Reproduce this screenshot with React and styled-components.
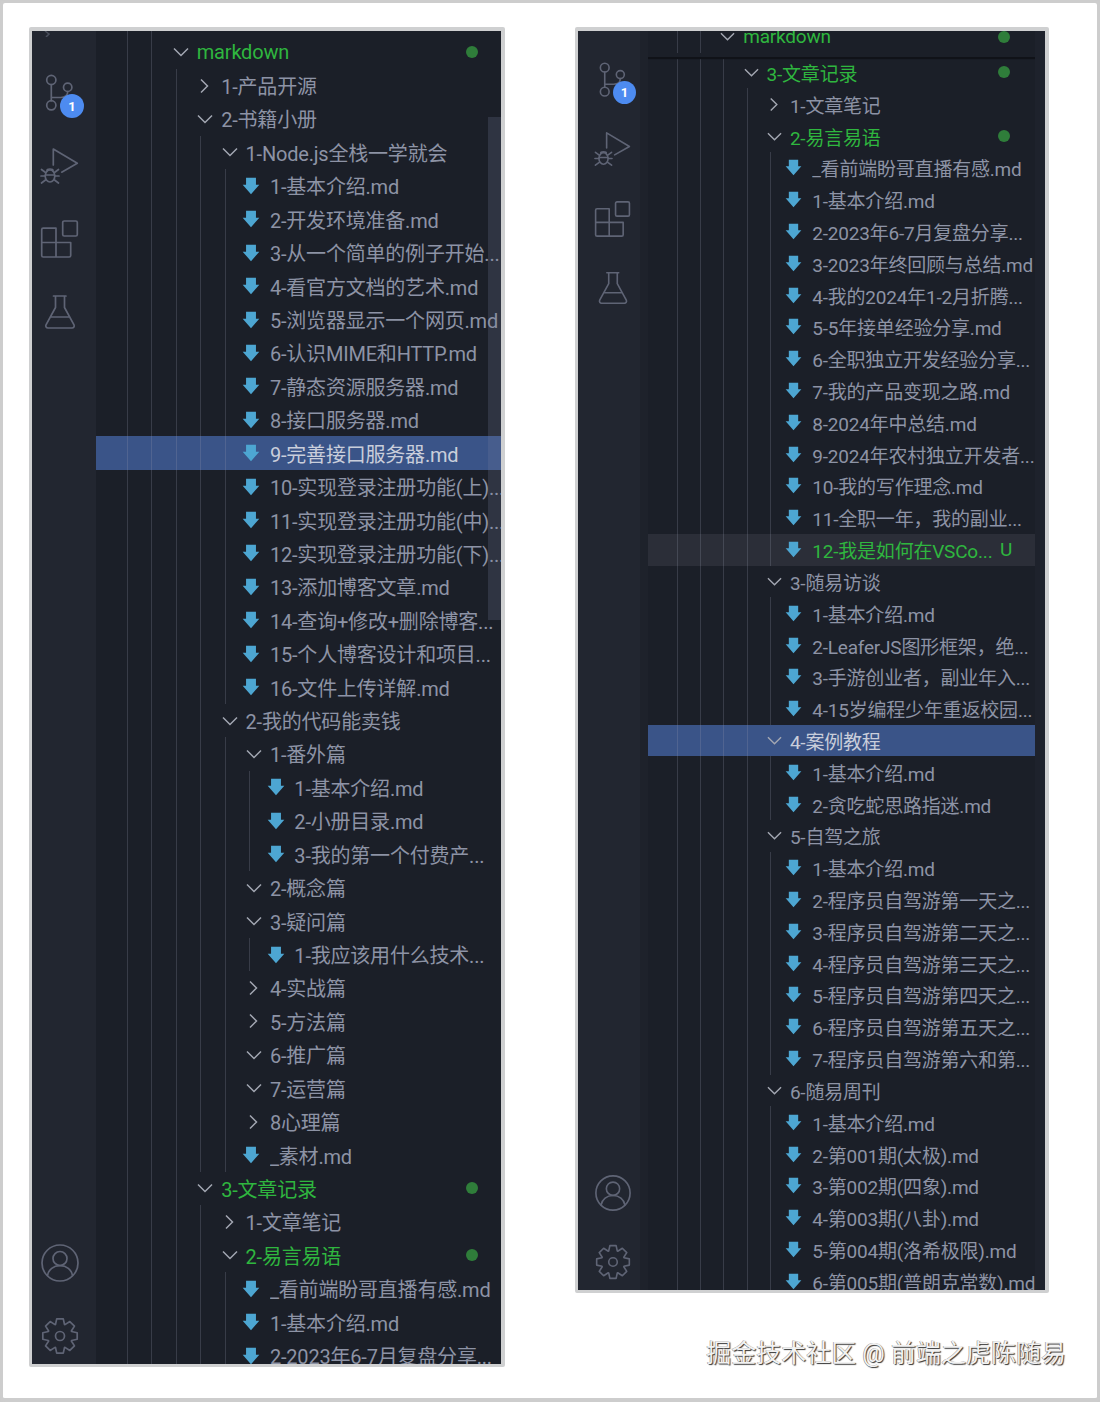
import React from 'react';
import styled, { createGlobalStyle } from 'styled-components';

const Global = createGlobalStyle`
  html, body { margin: 0; padding: 0; background: #ccc; }
  * { box-sizing: border-box; }
`;

const Page = styled.div`
  width: 1100px;
  height: 1402px;
  padding: 24px 49px 0 26px;
  display: flex;
  align-items: flex-start;
  gap: 70px;
  background: #fff;
  border: solid #cdcdcd;
  border-width: 3px 3px 4px 3px;
  border-radius: 5px;
  font-family: Roboto, 'Noto Sans CJK SC', sans-serif;
`;

const RightColumn = styled.div`
  display: flex;
  flex-direction: column;
  width: 474px;
`;

const Watermark = styled.div`
  align-self: flex-end;
  margin: 43px -17px 0 0;
  font-size: 25px;
  line-height: 36px;
  white-space: nowrap;
  color: #f2f2f2;
  text-shadow: 1px 1px 1px #333, -0.5px -0.5px 0 #888;
`;

const Window = styled.div`
  display: flex;
  width: ${(p) => p.$w}px;
  height: ${(p) => p.$h}px;
  flex: none;
  overflow: hidden;
  background: #1b1f28;
  border: solid #cfd0d1;
  border-width: 4px 4px 3px 3px;
  border-radius: 2px;
`;

const ActivityBar = styled.div`
  position: relative;
  flex: none;
  width: ${(p) => p.$w}px;
  padding: ${(p) => p.$top}px ${(p) => p.$pr}px 0 ${(p) => p.$pl}px;
  display: flex;
  flex-direction: column;
  justify-content: space-between;
  background: #222630;
  border-right: ${(p) => p.$edge}px solid #1e222b;
`;

const ActivityGroup = styled.div`
  display: flex;
  flex-direction: column;
  align-items: center;
  margin-bottom: ${(p) => p.$bottom || 0}px;
`;

const ActivityItem = styled.div`
  position: relative;
  height: ${(p) => p.$h}px;
  display: flex;
  align-items: center;
  justify-content: center;
  color: #5f6475;
`;

const Badge = styled.span`
  position: absolute;
  left: ${(p) => p.$left}px;
  top: ${(p) => p.$top}px;
  width: ${(p) => p.$size}px;
  height: ${(p) => p.$size}px;
  border-radius: 50%;
  display: flex;
  align-items: center;
  justify-content: center;
  background: #4d8bf0;
  color: #fff;
  font-size: 13px;
  font-weight: 700;
`;

const TopHint = styled.svg`
  position: absolute;
  left: 11px;
  top: 0;
  color: #4a4f5c;
`;

const Tree = styled.div`
  flex: 1;
  min-width: 0;
  position: relative;
  overflow: hidden;
`;

const Rows = styled.div`
  margin-top: ${(p) => p.$offset}px;
`;

const Row = styled.div`
  display: flex;
  align-items: center;
  height: ${(p) => p.$h}px;
  padding-left: ${(p) => p.$pad}px;
  font-size: ${(p) => p.$fs}px;
  white-space: nowrap;
  background: ${(p) => (p.$selected ? '#3a5488' : p.$hover ? '#2b2e38' : 'transparent')};
  color: ${(p) => (p.$green ? '#2fb63f' : p.$selected ? '#c9cedb' : '#8d93a5')};
`;

const Guide = styled.span`
  flex: none;
  align-self: stretch;
  width: ${(p) => p.$w}px;
  border-left: 1px solid rgba(150, 156, 175, 0.24);
`;

const Twistie = styled.span`
  flex: none;
  width: ${(p) => p.$w}px;
  display: flex;
  align-items: center;
  color: #a3a7b2;

  svg {
    margin-left: -3px;
  }
`;

const FileSlot = styled.span`
  flex: none;
  width: ${(p) => p.$w}px;
  display: flex;
  align-items: center;

  svg {
    margin-left: ${(p) => p.$shift}px;
  }
`;

const Label = styled.span`
  flex: 1;
  min-width: 0;
  overflow: hidden;
  letter-spacing: -0.2px;
`;

const Status = styled.span`
  flex: none;
  width: ${(p) => p.$w}px;
  display: flex;
  align-items: center;
  color: #2fb63f;
  font-size: 19px;
`;

const Dot = styled.span`
  width: 12px;
  height: 12px;
  border-radius: 50%;
  background: #2f7d3a;
`;

const Scrollbar = styled.div`
  position: absolute;
  top: 86px;
  right: 0;
  width: 13px;
  height: 503px;
  background: rgba(120, 128, 160, 0.22);
`;

const StickyHeader = styled.div`
  position: relative;
  z-index: 1;
  height: 25.5px;
  overflow: hidden;
  background: #1b1f28;
  box-shadow: 0 2px 1px #101218;
  margin-right: 10px;
`;

const StickyInner = styled.div`
  margin-top: -10px;
`;

const Overview = styled.div`
  position: absolute;
  right: 0;
  top: 0;
  bottom: 0;
  width: 10px;
  background: #1e222c;
  z-index: 2;
`;

const RightRows = styled.div`
  margin-right: 10px;
`;

const MdIcon = ({ size }) => (
  <svg width={size} height={size} viewBox="0 0 16 16">
    <path d="M3.6 0.6h8.800v6.200h3L8 15.400 0.600 6.800h3z" fill="#4da6d2" />
  </svg>
);

const OpenChevron = ({ size }) => (
  <svg width={size} height={size} viewBox="0 0 16 16" fill="none" stroke="currentColor" strokeWidth="1.500">
    <path d="M1 4.500l7 7 7-7" />
  </svg>
);

const ClosedChevron = ({ size }) => (
  <svg width={size} height={size} viewBox="0 0 16 16" fill="none" stroke="currentColor" strokeWidth="1.500">
    <path d="M4 1.500l6.500 6.500-6.500 6.500" />
  </svg>
);

const gearPath = () => {
  const pts = [];
  const teeth = 8;
  for (let i = 0; i < teeth; i++) {
    const a = (i / teeth) * Math.PI * 2 - Math.PI / 2;
    const w = Math.PI / teeth;
    [
      [12.4, -w * 0.95],
      [17.5, -w * 0.48],
      [17.5, w * 0.48],
      [12.4, w * 0.95],
    ].forEach(([r, d]) => {
      pts.push(`${(20 + r * Math.cos(a + d)).toFixed(2)} ${(20 + r * Math.sin(a + d)).toFixed(2)}`);
    });
  }
  return `M${pts.join('L')}Z`;
};

const iconProps = (size) => ({
  width: size,
  height: size,
  viewBox: '0 0 40 40',
  fill: 'none',
  stroke: 'currentColor',
  strokeWidth: 1.7,
  strokeLinecap: 'round',
  strokeLinejoin: 'round',
});

const SourceControlIcon = ({ size }) => (
  <svg {...iconProps(size)}>
    <circle cx="11.3" cy="7" r="4.6" />
    <circle cx="27.7" cy="14.3" r="4.2" />
    <circle cx="11.3" cy="32.3" r="4.6" />
    <path d="M11.3 11.6v16.1M27.700 18.500c0 4.500-3 6-7 6h-9.400" />
  </svg>
);

const DebugIcon = ({ size }) => (
  <svg {...iconProps(size)}>
    <path d="M13.3 19V3l24 14.300-15.600 8.900" />
    <ellipse cx="10" cy="30" rx="4.800" ry="6" />
    <path d="M5.500 29h9M1.500 23.500l4 3M18.500 23.500l-4 3M1 30h4M15 30h4M1.500 37l4-3M18.500 37l-4-3M7 24.500c0-2 6-2 6 0" />
  </svg>
);

const ExtensionsIcon = ({ size }) => (
  <svg {...iconProps(size)}>
    <rect x="22.7" y="2" width="14.6" height="15" rx="1.5" />
    <path d="M3.200 9.200H16v14.300h14.700V36.500a1.500 1.500 0 0 1-1.500 1.500H3.200a1.500 1.500 0 0 1-1.500-1.500V10.700a1.500 1.500 0 0 1 1.500-1.500zM1.700 23.500H16V38" />
  </svg>
);

const FlaskIcon = ({ size }) => (
  <svg {...iconProps(size)}>
    <path d="M13.500 4h12.500M15.500 4v11.500L6 32.800A2.200 2.200 0 0 0 8 36h24a2.200 2.200 0 0 0 2-3.200L24.500 15.500V4M10.500 25h19" />
  </svg>
);

const AccountIcon = ({ size }) => (
  <svg {...iconProps(size)}>
    <circle cx="20" cy="20" r="18" />
    <circle cx="20" cy="15.500" r="7" />
    <path d="M7.500 32.500c1-6 6-9.800 12.500-9.800s11.500 3.800 12.500 9.800" />
  </svg>
);

const GearIcon = ({ size }) => (
  <svg {...iconProps(size)}>
    <path d={gearPath()} />
    <circle cx="20" cy="20" r="4.500" />
  </svg>
);

const LEFT_ROWS = [
  [2, 'o', 'markdown', 'gd'],
  [3, 'c', '1-产品开源'],
  [3, 'o', '2-书籍小册'],
  [4, 'o', '1-Node.js全栈一学就会'],
  [5, 'f', '1-基本介绍.md'],
  [5, 'f', '2-开发环境准备.md'],
  [5, 'f', '3-从一个简单的例子开始...'],
  [5, 'f', '4-看官方文档的艺术.md'],
  [5, 'f', '5-浏览器显示一个网页.md'],
  [5, 'f', '6-认识MIME和HTTP.md'],
  [5, 'f', '7-静态资源服务器.md'],
  [5, 'f', '8-接口服务器.md'],
  [5, 'f', '9-完善接口服务器.md', 's'],
  [5, 'f', '10-实现登录注册功能(上)...'],
  [5, 'f', '11-实现登录注册功能(中)...'],
  [5, 'f', '12-实现登录注册功能(下)...'],
  [5, 'f', '13-添加博客文章.md'],
  [5, 'f', '14-查询+修改+删除博客...'],
  [5, 'f', '15-个人博客设计和项目...'],
  [5, 'f', '16-文件上传详解.md'],
  [4, 'o', '2-我的代码能卖钱'],
  [5, 'o', '1-番外篇'],
  [6, 'f', '1-基本介绍.md'],
  [6, 'f', '2-小册目录.md'],
  [6, 'f', '3-我的第一个付费产...'],
  [5, 'o', '2-概念篇'],
  [5, 'o', '3-疑问篇'],
  [6, 'f', '1-我应该用什么技术...'],
  [5, 'c', '4-实战篇'],
  [5, 'c', '5-方法篇'],
  [5, 'o', '6-推广篇'],
  [5, 'o', '7-运营篇'],
  [5, 'c', '8心理篇'],
  [5, 'f', '_素材.md'],
  [3, 'o', '3-文章记录', 'gd'],
  [4, 'c', '1-文章笔记'],
  [4, 'o', '2-易言易语', 'gd'],
  [5, 'f', '_看前端盼哥直播有感.md'],
  [5, 'f', '1-基本介绍.md'],
  [5, 'f', '2-2023年6-7月复盘分享...'],
];

const RIGHT_ROWS = [
  [3, 'o', '3-文章记录', 'gd'],
  [4, 'c', '1-文章笔记'],
  [4, 'o', '2-易言易语', 'gd'],
  [5, 'f', '_看前端盼哥直播有感.md'],
  [5, 'f', '1-基本介绍.md'],
  [5, 'f', '2-2023年6-7月复盘分享...'],
  [5, 'f', '3-2023年终回顾与总结.md'],
  [5, 'f', '4-我的2024年1-2月折腾...'],
  [5, 'f', '5-5年接单经验分享.md'],
  [5, 'f', '6-全职独立开发经验分享...'],
  [5, 'f', '7-我的产品变现之路.md'],
  [5, 'f', '8-2024年中总结.md'],
  [5, 'f', '9-2024年农村独立开发者...'],
  [5, 'f', '10-我的写作理念.md'],
  [5, 'f', '11-全职一年，我的副业...'],
  [5, 'f', '12-我是如何在VSCo...', 'gu'],
  [4, 'o', '3-随易访谈'],
  [5, 'f', '1-基本介绍.md'],
  [5, 'f', '2-LeaferJS图形框架，绝...'],
  [5, 'f', '3-手游创业者，副业年入...'],
  [5, 'f', '4-15岁编程少年重返校园...'],
  [4, 'o', '4-案例教程', 's'],
  [5, 'f', '1-基本介绍.md'],
  [5, 'f', '2-贪吃蛇思路指迷.md'],
  [4, 'o', '5-自驾之旅'],
  [5, 'f', '1-基本介绍.md'],
  [5, 'f', '2-程序员自驾游第一天之...'],
  [5, 'f', '3-程序员自驾游第二天之...'],
  [5, 'f', '4-程序员自驾游第三天之...'],
  [5, 'f', '5-程序员自驾游第四天之...'],
  [5, 'f', '6-程序员自驾游第五天之...'],
  [5, 'f', '7-程序员自驾游第六和第...'],
  [4, 'o', '6-随易周刊'],
  [5, 'f', '1-基本介绍.md'],
  [5, 'f', '2-第001期(太极).md'],
  [5, 'f', '3-第002期(四象).md'],
  [5, 'f', '4-第003期(八卦).md'],
  [5, 'f', '5-第004期(洛希极限).md'],
  [5, 'f', '6-第005期(普朗克常数).md'],
];

const LEFT = { h: 33.43, fs: 20, indent: 24.4, pad: 31, tw: 21, file: 21, icon: 18, shift: -6.5, chev: 16, dot: 35, u: 35 };
const RIGHT = { h: 31.82, fs: 19, indent: 23.35, pad: 28.5, tw: 20, file: 19, icon: 17, shift: -8, chev: 15, dot: 37, u: 35 };

const TreeRow = ({ row, m }) => {
  const [guides, kind, label, flag] = row;
  const green = flag === 'gd' || flag === 'gu';
  return (
    <Row
      $h={m.h}
      $pad={m.pad}
      $fs={m.fs}
      $green={green}
      $selected={flag === 's'}
      $hover={flag === 'gu'}
    >
      {Array.from({ length: guides }).map((_, i) => (
        <Guide key={i} $w={m.indent} />
      ))}
      {kind === 'f' && (
        <FileSlot $w={m.file} $shift={m.shift}>
          <MdIcon size={m.icon} />
        </FileSlot>
      )}
      {kind !== 'f' && label && (
        <Twistie $w={m.tw}>
          {kind === 'o' ? <OpenChevron size={m.chev} /> : <ClosedChevron size={m.chev} />}
        </Twistie>
      )}
      <Label>{label}</Label>
      {flag === 'gd' && (
        <Status $w={m.dot}>
          <Dot />
        </Status>
      )}
      {flag === 'gu' && <Status $w={m.u}>U</Status>}
    </Row>
  );
};

const Activity = ({ w, pl, pr, edge, top, cell, icon, bottom, badge, hint }) => (
  <ActivityBar $w={w} $pl={pl} $pr={pr} $edge={edge} $top={top}>
    {hint && (
      <TopHint width="10" height="6" viewBox="0 0 10 6" fill="none" stroke="currentColor" strokeWidth="1.5">
        <path d="M2 0l4 3-3 3" />
      </TopHint>
    )}
    <ActivityGroup>
      <ActivityItem $h={cell}>
        <SourceControlIcon size={icon} />
        <Badge $size={badge.size} $left={badge.left} $top={badge.top}>1</Badge>
      </ActivityItem>
      <ActivityItem $h={cell}>
        <DebugIcon size={icon} />
      </ActivityItem>
      <ActivityItem $h={cell}>
        <ExtensionsIcon size={icon} />
      </ActivityItem>
      <ActivityItem $h={cell}>
        <FlaskIcon size={icon} />
      </ActivityItem>
    </ActivityGroup>
    <ActivityGroup $bottom={bottom}>
      <ActivityItem $h={cell}>
        <AccountIcon size={icon} />
      </ActivityItem>
      <ActivityItem $h={cell}>
        <GearIcon size={icon} />
      </ActivityItem>
    </ActivityGroup>
  </ActivityBar>
);

export default function App() {
  return (
    <>
      <Global />
      <Page>
        <Window $w={476} $h={1340}>
          <Activity
            w={64}
            pl={0}
            pr={8}
            edge={0}
            top={25}
            cell={73}
            icon={40}
            bottom={-8.5}
            badge={{ size: 24, left: 20, top: 38 }}
            hint
          />
          <Tree>
            <Rows $offset={-29}>
              <TreeRow row={[2, 'n', '']} m={LEFT} />
              {LEFT_ROWS.map((row, i) => (
                <TreeRow key={i} row={row} m={LEFT} />
              ))}
            </Rows>
            <Scrollbar />
          </Tree>
        </Window>
        <RightColumn>
          <Window $w={474} $h={1266}>
            <Activity
              w={70}
              pl={7}
              pr={0}
              edge={8}
              top={14}
              cell={69.5}
              icon={38}
              bottom={-6.75}
              badge={{ size: 23, left: 19.5, top: 35.5 }}
            />
            <Tree>
              <StickyHeader>
                <StickyInner>
                  <TreeRow row={[2, 'o', 'markdown', 'gd']} m={RIGHT} />
                </StickyInner>
              </StickyHeader>
              <RightRows>
                {RIGHT_ROWS.map((row, i) => (
                  <TreeRow key={i} row={row} m={RIGHT} />
                ))}
              </RightRows>
              <Overview />
            </Tree>
          </Window>
          <Watermark>掘金技术社区 @ 前端之虎陈随易</Watermark>
        </RightColumn>
      </Page>
    </>
  );
}
